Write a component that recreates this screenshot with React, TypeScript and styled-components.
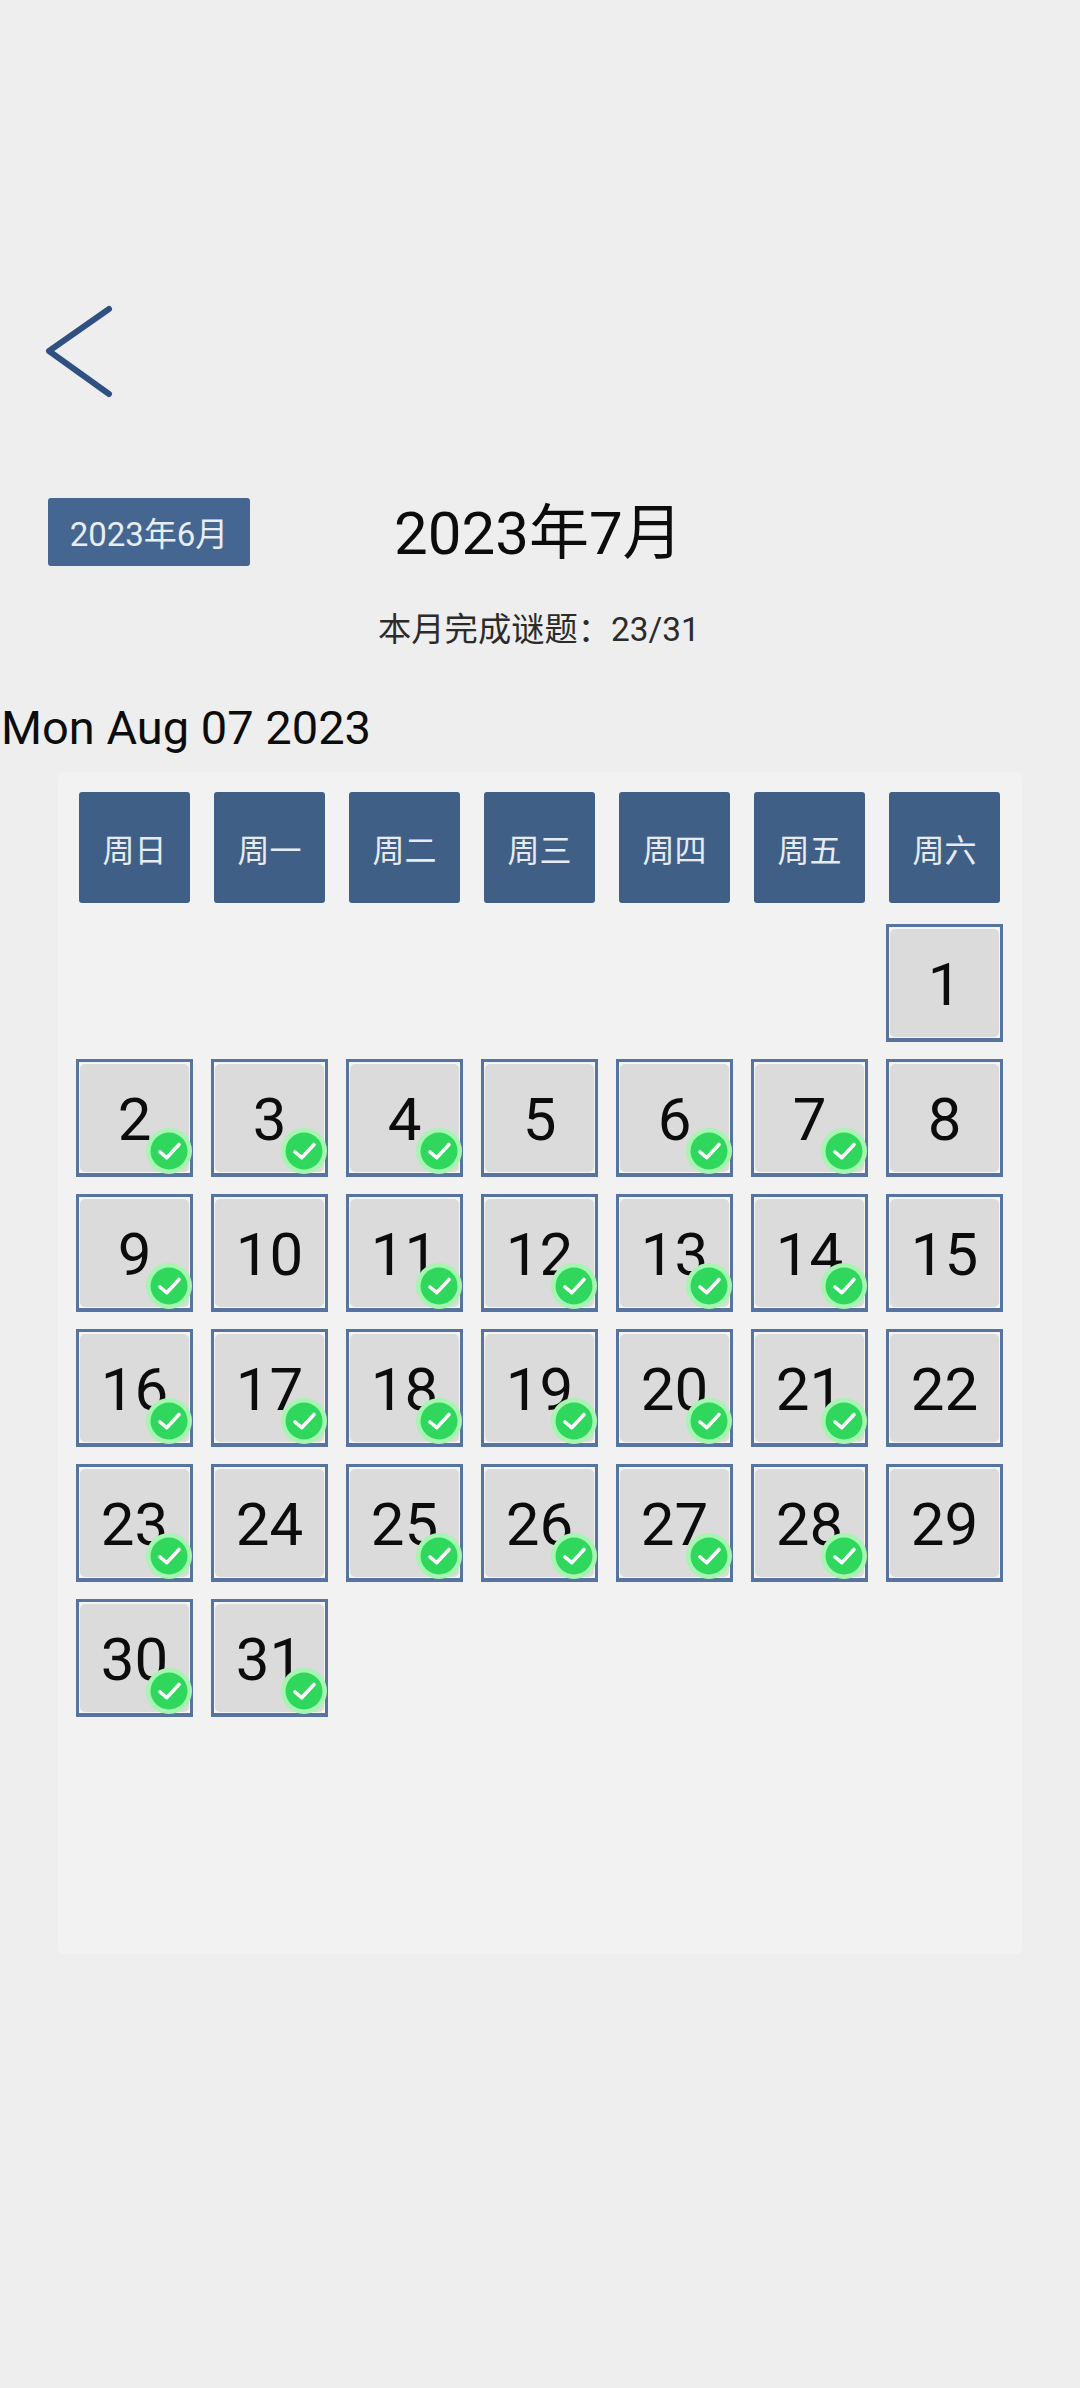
import * as React from 'react';
import styled, { createGlobalStyle } from 'styled-components';

const Global = createGlobalStyle`
    html, body {
        margin: 0;
        padding: 0;
        background: #eeeeee;
    }
`;

const Page = styled.div`
    width: 1080px;
    height: 2388px;
    overflow: hidden;
    background: #eeeeee;
    color: #0c0c0c;
    font-family: Roboto, "Noto Sans CJK SC", sans-serif;
`;

const BackButton = styled.div`
    width: 75px;
    height: 100px;
    margin: 302px 0 0 42px;
    color: #2f5080;
`;

const MonthRow = styled.div`
    display: flex;
    align-items: center;
    margin: 96px 0 0 48px;
    height: 68px;
`;

const PrevMonth = styled.div`
    width: 202px;
    height: 68px;
    display: flex;
    align-items: center;
    justify-content: center;
    border-radius: 3px;
    background: #456690;
    color: #e8edf3;
    font-size: 33px;
`;

const MonthTitle = styled.div`
    margin-left: 144px;
    padding-top: 4px;
    font-size: 60px;
    line-height: 68px;
`;

const Progress = styled.div`
    margin: 44px 0 0 378px;
    font-size: 33.3px;
    line-height: 40px;
    color: #2b2b2b;
`;

const Today = styled.div`
    margin: 48px 0 0 1px;
    font-size: 47px;
    line-height: 60px;
`;

const Panel = styled.div`
    width: 964px;
    height: 1182px;
    box-sizing: border-box;
    margin: 14px 0 0 58px;
    padding: 8px 9px;
    border-radius: 6px;
    background: #f2f2f3;
`;

const Grid = styled.div`
    display: grid;
    grid-template-columns: repeat(7, 135px);
    grid-auto-rows: 135px;
    place-items: center;
`;

const DayHead = styled.div`
    width: 111px;
    height: 111px;
    display: flex;
    align-items: center;
    justify-content: center;
    border-radius: 3px;
    background: #3f5f86;
    color: #e6ebf1;
    font-size: 32px;
`;

const Cell = styled.div`
    position: relative;
    width: 117px;
    height: 118px;
    box-sizing: border-box;
    border: 3px solid #56749f;
    border-bottom-width: 4px;
    padding: 2px 1px 1px;
    background: #f4f5f7;
`;

const Face = styled.div`
    height: 100%;
    box-sizing: border-box;
    padding-top: 3px;
    display: flex;
    align-items: center;
    justify-content: center;
    border-radius: 5px;
    background: #dbdbdb;
    color: #0c0c0c;
    font-size: 60px;
`;

const Done = styled.svg`
    position: absolute;
    right: -2px;
    bottom: -1px;
    width: 46px;
    height: 46px;
`;

const Check = () => (
    <Done viewBox="0 0 46 46">
        <circle cx="23" cy="23" r="23" fill="#a6f5b0" />
        <circle cx="23" cy="23" r="18.5" fill="#2fd75c" />
        <path d="M14 24l6.7 5.7L33 16.5" fill="none" stroke="#ffffff" strokeWidth="3.6" strokeLinecap="round" strokeLinejoin="round" />
    </Done>
);

const heads = ['周日', '周一', '周二', '周三', '周四', '周五', '周六'];
const open = [1, 5, 8, 10, 15, 22, 24, 29];
const days = Array.from({ length: 31 }, (_, i) => i + 1);

export default function App() {
    return (
        <Page>
            <Global />
            <BackButton>
                <svg width="75" height="100" viewBox="0 0 75 100">
                    <path d="M67 7L7 49l60 43" fill="none" stroke="currentColor" strokeWidth="6" strokeLinecap="round" strokeLinejoin="round" />
                </svg>
            </BackButton>
            <MonthRow>
                <PrevMonth>2023年6月</PrevMonth>
                <MonthTitle>2023年7月</MonthTitle>
            </MonthRow>
            <Progress>本月完成谜题{'\uFF1A'}23/31</Progress>
            <Today>Mon Aug 07 2023</Today>
            <Panel>
                <Grid>
                    {heads.map((h) => <DayHead key={h}>{h}</DayHead>)}
                    {Array.from({ length: 6 }, (_, i) => <div key={i} />)}
                    {days.map((d) => (
                        <Cell key={d}>
                            <Face>{d}</Face>
                            {!open.includes(d) && <Check />}
                        </Cell>
                    ))}
                </Grid>
            </Panel>
        </Page>
    );
}
